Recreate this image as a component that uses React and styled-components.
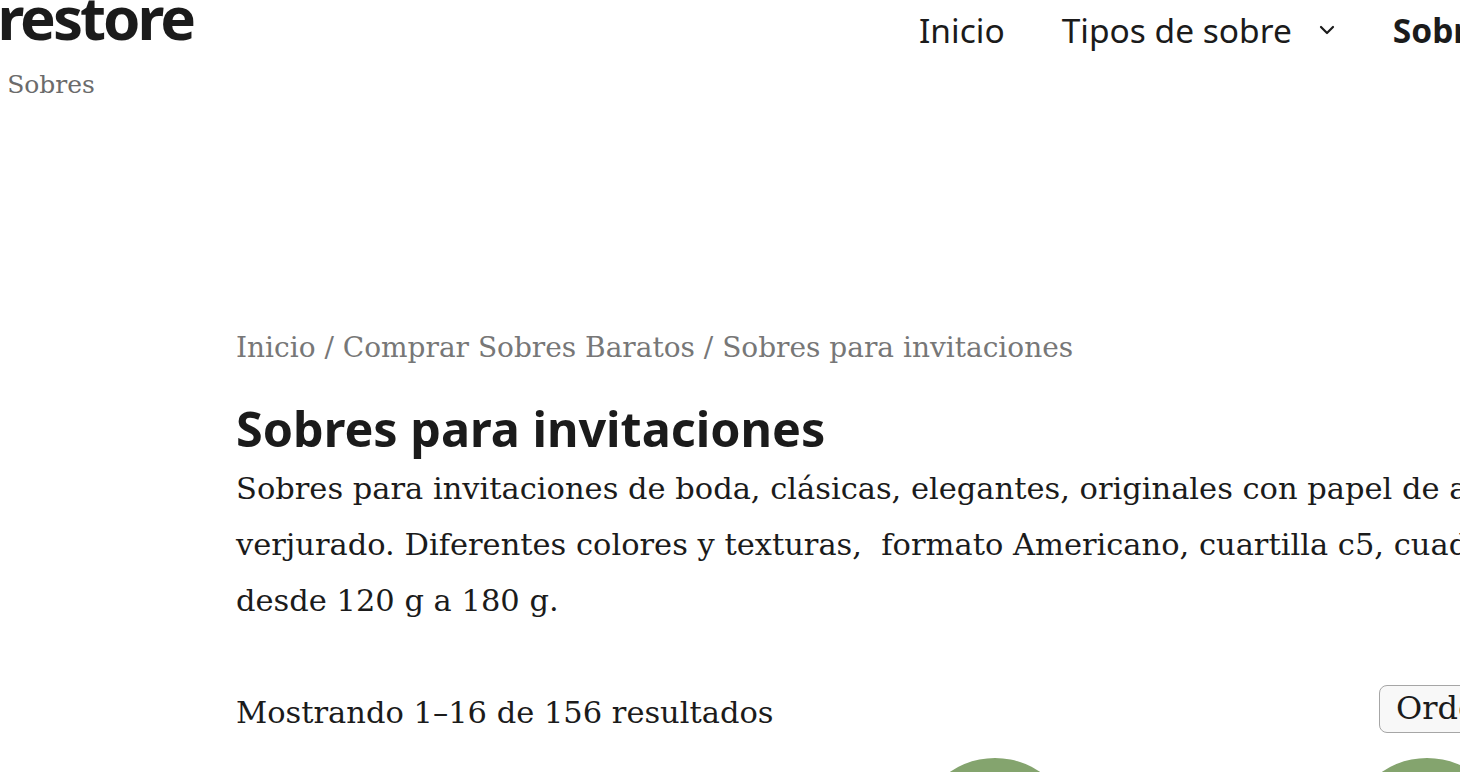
import React from 'react';
import styled, { createGlobalStyle } from 'styled-components';

const Global = createGlobalStyle`
  html, body {
    margin: 0;
    padding: 0;
    background: #fff;
    overflow: hidden;
  }
  body {
    font-family: "DejaVu Serif", "Liberation Serif", serif;
    color: #1b1b1b;
  }
`;

const Page = styled.div`
  width: 1460px;
  height: 772px;
  overflow: hidden;
`;

const Header = styled.header`
  display: flex;
  align-items: flex-start;
  height: 100px;
  white-space: nowrap;
`;

const Brand = styled.div`
  flex: 0 0 auto;
  width: 1021px;
  margin-left: -102px;
`;

const Logo = styled.div`
  font-family: "Noto Sans", "Open Sans", sans-serif;
  font-weight: 700;
  font-size: 60px;
  line-height: 60px;
  margin-top: -13px;
  letter-spacing: -3px;
  color: #1b1b1b;
`;

const Tagline = styled.div`
  font-size: 25px;
  line-height: 32px;
  margin: 22px 0 0 -24px;
  color: #6b6b6b;
`;

const Nav = styled.nav`
  display: flex;
  align-items: center;
  gap: 57px;
  margin-top: 7px;
  font-family: "Noto Sans", "Open Sans", sans-serif;
  font-size: 33.5px;
  color: #1b1b1b;
`;

const NavItem = styled.a`
  display: flex;
  align-items: center;
  gap: 26px;
  font-weight: ${(p) => (p.$active ? 700 : 400)};
  text-decoration: none;
  color: inherit;
`;

const Main = styled.main`
  width: 1700px;
  padding: 0 0 0 236px;
  margin-top: 228px;
`;

const Crumbs = styled.div`
  font-size: 28px;
  line-height: 40px;
  color: #777;
`;

const Title = styled.h1`
  font-family: "Noto Sans", "Open Sans", sans-serif;
  font-weight: 700;
  font-size: 48.5px;
  line-height: 54px;
  margin: 33px 0 0;
  color: #1b1b1b;
`;

const Desc = styled.p`
  font-size: 30.5px;
  line-height: 56px;
  margin: 6px 0 0;
  white-space: nowrap;
  color: #1b1b1b;
`;

const Toolbar = styled.div`
  display: flex;
  align-items: center;
  margin-top: 52px;
`;

const Count = styled.span`
  flex: 0 0 1143px;
  font-size: 30.5px;
  line-height: 48px;
  padding-top: 8px;
`;

const SortBox = styled.div`
  box-sizing: border-box;
  height: 48px;
  padding: 0 16px;
  border: 1.5px solid #a6a6a6;
  border-radius: 8px;
  background: #f8f8f8;
  font-size: 32px;
  line-height: 45px;
  white-space: nowrap;
`;

const Products = styled.div`
  display: flex;
  gap: 272px;
  margin: 21px 0 0 679px;
`;

const Badge = styled.div`
  width: 160px;
  height: 160px;
  flex: 0 0 auto;
  border-radius: 50%;
  background: #84a46e;
`;

export default function App() {
  return (
    <Page>
      <Global />
      <Header>
        <Brand>
          <Logo>Sobrestore</Logo>
          <Tagline>Tienda de Sobres</Tagline>
        </Brand>
        <Nav>
          <NavItem href="#">Inicio</NavItem>
          <NavItem href="#">
            Tipos de sobre
            <svg width="18" height="12" viewBox="0 0 18 12" fill="none" stroke="#1b1b1b" strokeWidth="2.2" strokeLinecap="round" strokeLinejoin="round">
              <path d="M3 3l6 6 6-6" />
            </svg>
          </NavItem>
          <NavItem href="#" $active>Sobres baratos</NavItem>
        </Nav>
      </Header>
      <Main>
        <Crumbs>Inicio / Comprar Sobres Baratos / Sobres para invitaciones</Crumbs>
        <Title>Sobres para invitaciones</Title>
        <Desc>
          Sobres para invitaciones de boda, clásicas, elegantes, originales con papel de algodón o<br />
          verjurado. Diferentes colores y texturas,&nbsp; formato Americano, cuartilla c5, cuadrado,<br />
          desde 120 g a 180 g.
        </Desc>
        <Toolbar>
          <Count>Mostrando 1–16 de 156 resultados</Count>
          <SortBox>Orden predeterminado</SortBox>
        </Toolbar>
        <Products>
          <Badge />
          <Badge />
        </Products>
      </Main>
    </Page>
  );
}
